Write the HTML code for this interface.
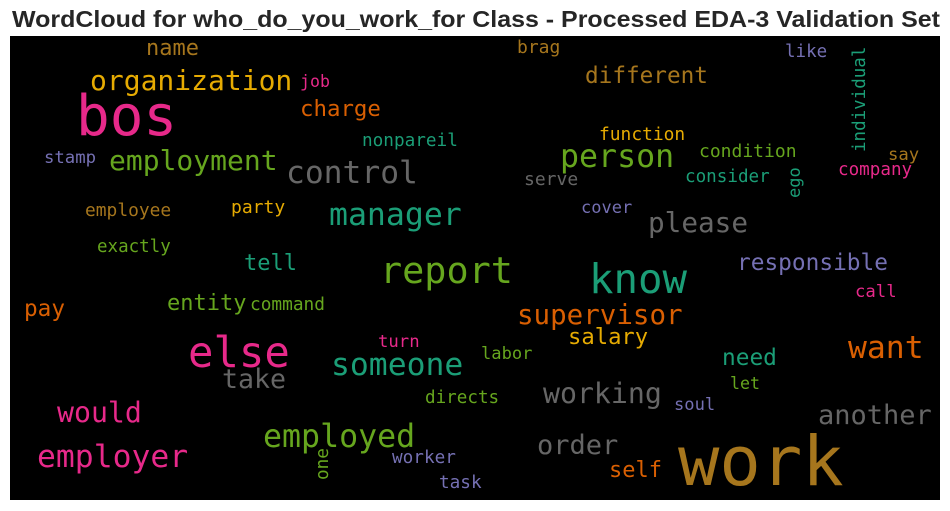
<!DOCTYPE html>
<html><head><meta charset="utf-8"><style>
html,body{margin:0;padding:0;background:#fff;width:950px;height:511px;overflow:hidden}
svg{display:block}
.w{font-family:"DejaVu Sans Mono","Liberation Mono",monospace}
</style></head><body>
<svg width="950" height="511" xmlns="http://www.w3.org/2000/svg">
<rect x="0" y="0" width="950" height="511" fill="#fff"/>
<text x="12" y="27" font-family="Liberation Sans, Arial, sans-serif" font-weight="bold" font-size="23" fill="#262626" textLength="928" lengthAdjust="spacingAndGlyphs">WordCloud for who_do_you_work_for Class - Processed EDA-3 Validation Set</text>
<rect x="10" y="36" width="930" height="464" fill="#000"/>
<g class="w">
<text x="76" y="135" font-size="56" fill="#e7298a">bos</text>
<text x="146" y="55" font-size="22" fill="#a6761d">name</text>
<text x="90" y="90" font-size="28" fill="#e6ab02">organization</text>
<text x="300" y="87" font-size="16.6" fill="#e7298a">job</text>
<text x="300" y="116" font-size="22.4" fill="#d95f02">charge</text>
<text x="362" y="146" font-size="17.7" fill="#1b9e77">nonpareil</text>
<text x="44" y="163" font-size="17.3" fill="#7570b3">stamp</text>
<text x="109" y="170" font-size="28" fill="#66a61e">employment</text>
<text x="286" y="183" font-size="31.3" fill="#666666">control</text>
<text x="85" y="216" font-size="17.9" fill="#a6761d">employee</text>
<text x="231" y="213" font-size="18" fill="#e6ab02">party</text>
<text x="329" y="225" font-size="31.5" fill="#1b9e77">manager</text>
<text x="97" y="252" font-size="17.5" fill="#66a61e">exactly</text>
<text x="244" y="270" font-size="22" fill="#1b9e77">tell</text>
<text x="517" y="53" font-size="18" fill="#a6761d">brag</text>
<text x="785" y="57" font-size="17.5" fill="#7570b3">like</text>
<text x="585" y="83" font-size="22.7" fill="#a6761d">different</text>
<text transform="translate(865,152) rotate(-90)" font-size="17.5" fill="#1b9e77">individual</text>
<text x="599" y="140" font-size="17.9" fill="#e6ab02">function</text>
<text x="560" y="167" font-size="31.6" fill="#66a61e">person</text>
<text x="699" y="157" font-size="18" fill="#66a61e">condition</text>
<text x="888" y="160" font-size="17.3" fill="#a6761d">say</text>
<text x="838" y="175" font-size="17.6" fill="#e7298a">company</text>
<text x="524" y="185" font-size="18" fill="#666666">serve</text>
<text x="685" y="182" font-size="17.6" fill="#1b9e77">consider</text>
<text transform="translate(800,198) rotate(-90)" font-size="17" fill="#1b9e77">ego</text>
<text x="581" y="213" font-size="17" fill="#7570b3">cover</text>
<text x="648" y="232" font-size="27.7" fill="#666666">please</text>
<text x="24" y="316" font-size="22.7" fill="#d95f02">pay</text>
<text x="167" y="310" font-size="22" fill="#66a61e">entity</text>
<text x="250" y="310" font-size="17.8" fill="#66a61e">command</text>
<text x="378" y="347" font-size="17.3" fill="#e7298a">turn</text>
<text x="188" y="367" font-size="42.3" fill="#e7298a">else</text>
<text x="222" y="388" font-size="26.6" fill="#666666">take</text>
<text x="331" y="375" font-size="31.4" fill="#1b9e77">someone</text>
<text x="57" y="422" font-size="28.2" fill="#e7298a">would</text>
<text x="263" y="447" font-size="31.6" fill="#66a61e">employed</text>
<text x="37" y="467" font-size="31.4" fill="#e7298a">employer</text>
<text transform="translate(328,480) rotate(-90)" font-size="17.7" fill="#66a61e">one</text>
<text x="392" y="463" font-size="17.7" fill="#7570b3">worker</text>
<text x="439" y="488" font-size="17.7" fill="#7570b3">task</text>
<text x="425" y="403" font-size="17.6" fill="#66a61e">directs</text>
<text x="380" y="283" font-size="36.8" fill="#66a61e">report</text>
<text x="589" y="293" font-size="40.7" fill="#1b9e77">know</text>
<text x="737" y="270" font-size="22.8" fill="#7570b3">responsible</text>
<text x="855" y="297" font-size="17.3" fill="#e7298a">call</text>
<text x="517" y="324" font-size="27.5" fill="#d95f02">supervisor</text>
<text x="568" y="344" font-size="22.2" fill="#e6ab02">salary</text>
<text x="481" y="359" font-size="17.1" fill="#66a61e">labor</text>
<text x="848" y="358" font-size="31.4" fill="#d95f02">want</text>
<text x="722" y="365" font-size="22.8" fill="#1b9e77">need</text>
<text x="730" y="389" font-size="16.6" fill="#66a61e">let</text>
<text x="543" y="403" font-size="28.2" fill="#666666">working</text>
<text x="674" y="410" font-size="17.1" fill="#7570b3">soul</text>
<text x="818" y="424" font-size="27" fill="#666666">another</text>
<text x="537" y="454" font-size="27" fill="#666666">order</text>
<text x="609" y="477" font-size="22" fill="#d95f02">self</text>
<text x="678" y="485" font-size="68.8" fill="#a6761d">work</text>
</g>
</svg>
</body></html>
